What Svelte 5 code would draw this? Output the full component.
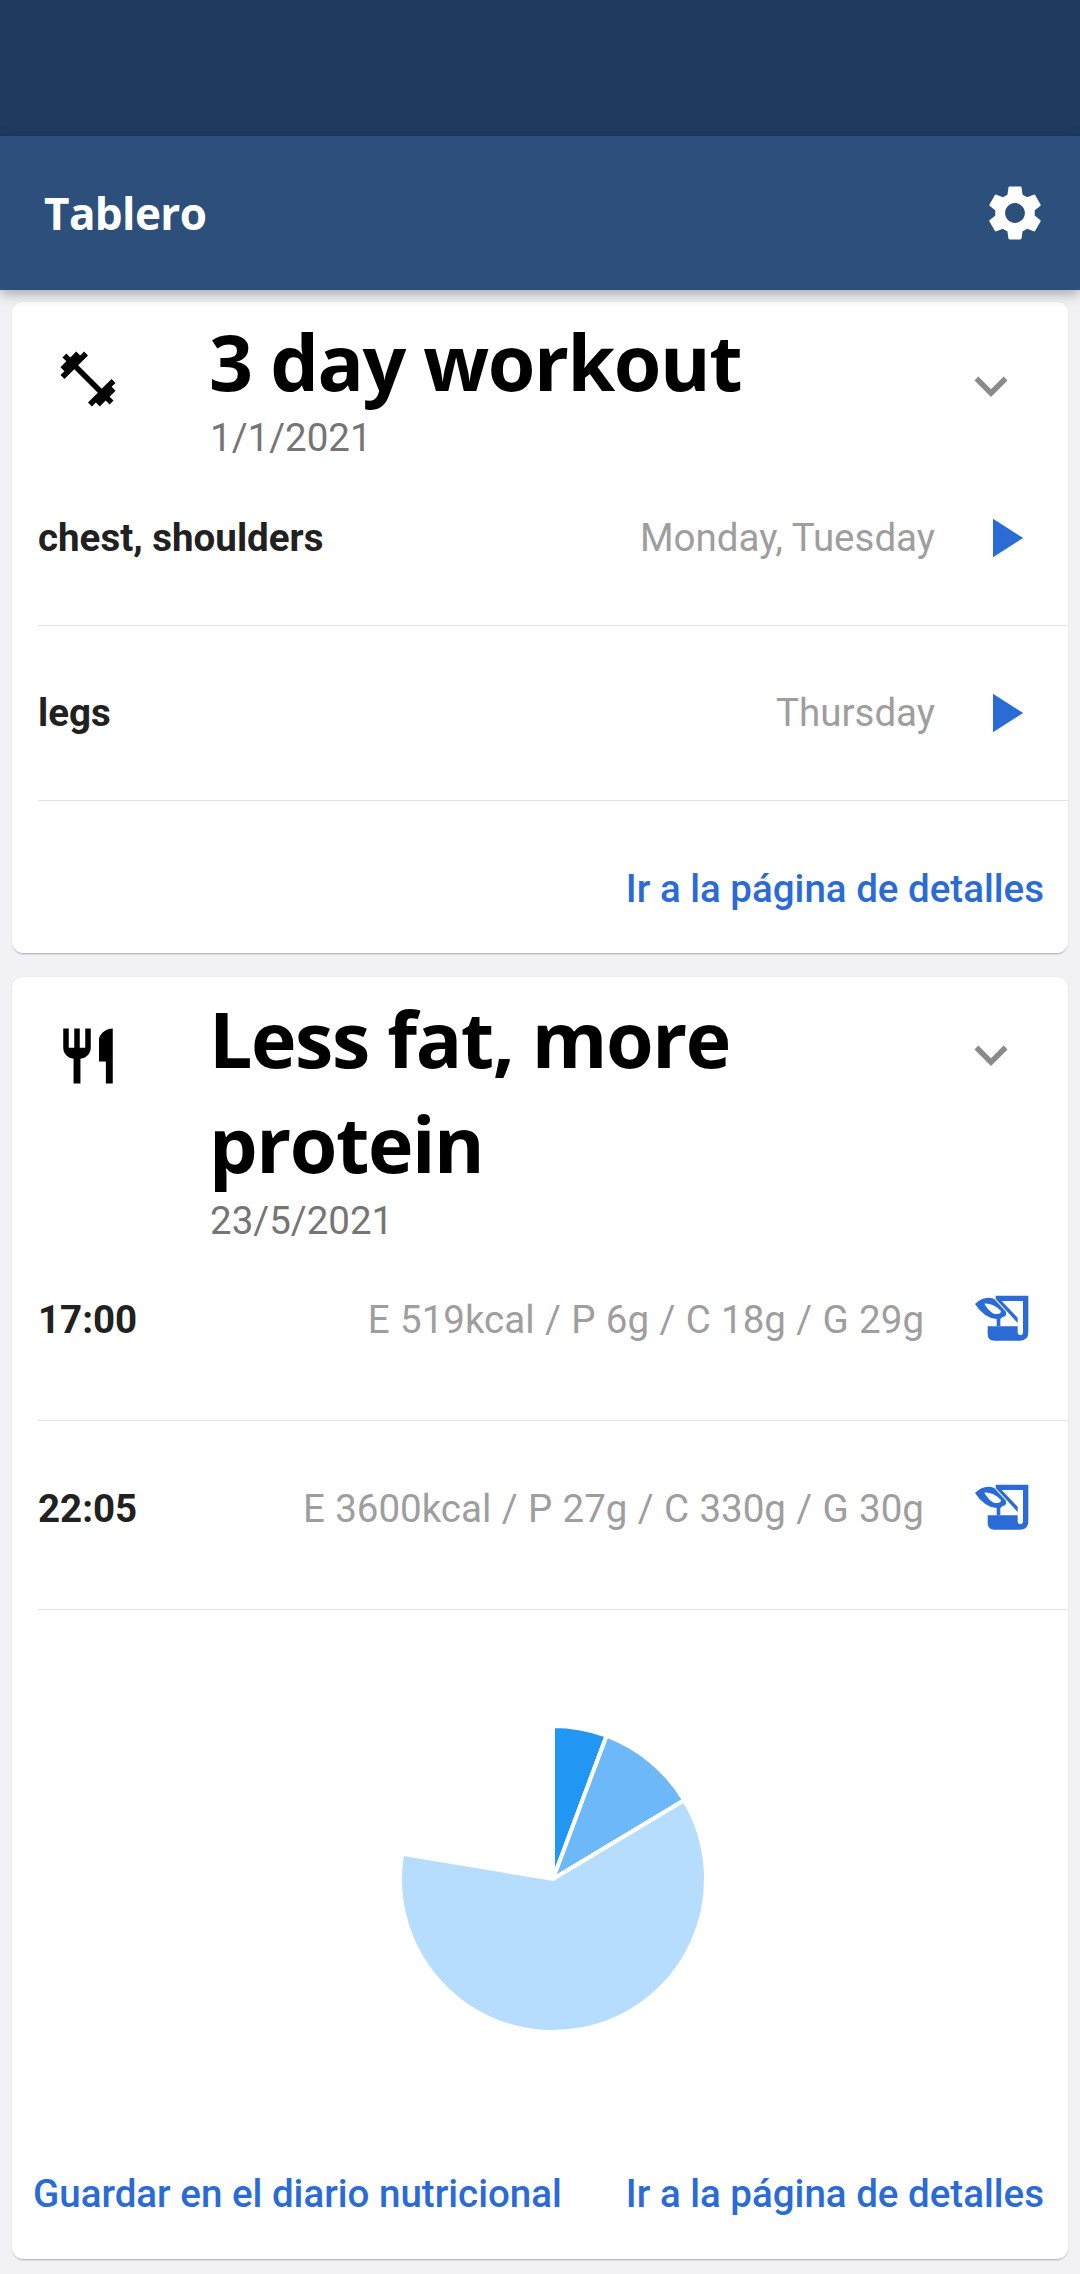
<script>
  const workouts = [
    { name: 'chest, shoulders', days: 'Monday, Tuesday' },
    { name: 'legs', days: 'Thursday' }
  ];
  const meals = [
    { time: '17:00', macros: 'E 519kcal / P 6g / C 18g / G 29g' },
    { time: '22:05', macros: 'E 3600kcal / P 27g / C 330g / G 30g' }
  ];

  // pie slices, angles in degrees clockwise from 12 o'clock
  const slices = [
    { from: 0, to: 20.5, color: '#2196f3' },
    { from: 20.5, to: 59, color: '#6cb8f8' },
    { from: 59, to: 279.5, color: '#b6ddfd' }
  ];
  const cx = 541;
  const cy = 269;
  const r = 153;

  function point(deg) {
    const a = (deg * Math.PI) / 180;
    return `${(cx + r * Math.sin(a)).toFixed(2)} ${(cy - r * Math.cos(a)).toFixed(2)}`;
  }
  function slicePath(s) {
    const large = s.to - s.from > 180 ? 1 : 0;
    return `M${cx} ${cy} L${point(s.from)} A${r} ${r} 0 ${large} 1 ${point(s.to)} Z`;
  }
</script>

{#snippet chevron()}
  <svg class="chevron" viewBox="0 0 24 24"><path d="M16.59 8.59 12 13.17 7.41 8.59 6 10l6 6 6-6z" /></svg>
{/snippet}

<div class="screen">
  <div class="status"></div>
  <header class="appbar">
    <span class="appbar-title">Tablero</span>
    <svg class="gear" viewBox="0 0 24 24">
      <path d="M19.14 12.94c.04-.3.06-.61.06-.94 0-.32-.02-.64-.07-.94l2.03-1.58a.49.49 0 0 0 .12-.61l-1.92-3.32a.488.488 0 0 0-.59-.22l-2.39.96c-.5-.38-1.03-.7-1.62-.94l-.36-2.54a.484.484 0 0 0-.48-.41h-3.84c-.24 0-.43.17-.47.41l-.36 2.54c-.59.24-1.13.57-1.62.94l-2.39-.96c-.22-.08-.47 0-.59.22L2.74 8.87c-.12.21-.08.47.12.61l2.03 1.58c-.05.3-.09.63-.09.94s.02.64.07.94l-2.03 1.58a.49.49 0 0 0-.12.61l1.92 3.32c.12.22.37.29.59.22l2.39-.96c.5.38 1.03.7 1.62.94l.36 2.54c.05.24.24.41.48.41h3.84c.24 0 .44-.17.47-.41l.36-2.54c.59-.24 1.13-.56 1.62-.94l2.39.96c.22.08.47 0 .59-.22l1.92-3.32c.12-.22.07-.47-.12-.61l-2.01-1.58zM12 15.6c-1.98 0-3.6-1.62-3.6-3.6s1.62-3.6 3.6-3.6 3.6 1.62 3.6 3.6-1.62 3.6-3.6 3.6z" />
    </svg>
  </header>

  <section class="card first">
    <div class="head">
      <svg class="head-icon" viewBox="0 0 24 24">
        <path d="M20.57 14.86 22 13.43 20.57 12 17 15.57 8.43 7 12 3.43 10.57 2 9.14 3.43 7.71 2 5.57 4.14 4.14 2.71 2.71 4.14l1.43 1.43L2 7.71l1.43 1.43L2 10.57 3.43 12 7 8.43 15.57 17 12 20.57 13.43 22l1.43-1.43L16.29 22l2.14-2.14 1.43 1.43 1.43-1.43-1.43-1.43L22 16.29z" />
      </svg>
      <div class="head-text">
        <h2>3 day workout</h2>
        <p class="date">1/1/2021</p>
      </div>
      {@render chevron()}
    </div>
    {#each workouts as w}
      <div class="row workout">
        <span class="row-name">{w.name}</span>
        <span class="row-info">{w.days}</span>
        <svg class="row-icon play" viewBox="0 0 24 24"><path d="M8 5v14l11-7z" /></svg>
      </div>
    {/each}
    <div class="links single">
      <span class="link">Ir a la página de detalles</span>
    </div>
  </section>

  <section class="card second">
    <div class="head">
      <svg class="head-icon" viewBox="0 0 24 24">
        <path d="M11 9H9V2H7v7H5V2H3v7c0 2.12 1.66 3.84 3.75 3.97V22h2.5v-9.03C11.34 12.84 13 11.12 13 9V2h-2v7zm5-3v8h2.5v8H21V2c-2.76 0-5 2.24-5 4z" />
      </svg>
      <div class="head-text">
        <h2>Less fat, more protein</h2>
        <p class="date">23/5/2021</p>
      </div>
      {@render chevron()}
    </div>
    {#each meals as m}
      <div class="row meal">
        <span class="row-name">{m.time}</span>
        <span class="row-info">{m.macros}</span>
        <svg class="row-icon diary" viewBox="0 0 330 240">
          <path d="M134 50H232V160Q232 185 207 185H130Q110 185 110 165V142H200V158Q200 168 208 168Q216 168 216 158V66H152L200 116V132L134 60Z" />
          <path fill-rule="evenodd" d="M72 75Q100 48 130 60L165 98Q168 112 155 114L148 120V142H137V120Q100 118 72 75ZM100 74Q125 72 150 96Q150 108 128 104Q112 95 100 74Z" />
        </svg>
      </div>
    {/each}
    <div class="chart">
      <svg width="1056" height="540" viewBox="0 0 1056 540">
        {#each slices as s}
          <path d={slicePath(s)} fill={s.color} stroke="#fff" stroke-width="4" />
        {/each}
      </svg>
    </div>
    <div class="links">
      <span class="link">Guardar en el diario nutricional</span>
      <span class="link">Ir a la página de detalles</span>
    </div>
  </section>
</div>

<style>
  :global(body) {
    margin: 0;
    background: #f2f2f4;
  }
  .screen {
    width: 1080px;
    height: 2274px;
    overflow: hidden;
    background: #f2f2f4;
    font-family: Roboto, sans-serif;
  }
  .status {
    height: 136px;
    background: #1f3a60;
  }
  .appbar {
    position: relative;
    height: 154px;
    background: #2c4f7c;
    display: flex;
    align-items: center;
    justify-content: space-between;
    padding: 0 32px 0 44px;
    box-shadow: 0 4px 12px rgba(0, 0, 0, 0.3);
  }
  .appbar-title {
    font-family: 'Open Sans', sans-serif;
    font-weight: 700;
    font-size: 44px;
    letter-spacing: -0.6px;
    color: #fff;
  }
  .gear {
    width: 66px;
    height: 66px;
    fill: #fff;
  }
  .card {
    margin: 12px 12px 24px;
    background: #fff;
    border-radius: 11px;
    box-shadow: 0 2px 2px -1px rgba(0, 0, 0, 0.3), 0 0 2px rgba(0, 0, 0, 0.07);
  }
  .head {
    display: flex;
    align-items: flex-start;
    padding: 7px 44px 0 43px;
  }
  .second .head {
    padding-top: 9px;
  }
  .head-icon {
    width: 66px;
    height: 66px;
    flex: none;
    margin-top: 37px;
  }
  .head-text {
    flex: 1;
    margin-left: 89px;
  }
  h2 {
    margin: 0 0 3px -1px;
    font-family: 'Open Sans', sans-serif;
    font-weight: 700;
    font-size: 77px;
    line-height: 105px;
    letter-spacing: -1.45px;
    color: #000;
    max-width: 590px;
  }
  .second h2 {
    margin-bottom: 4px;
  }
  .date {
    margin: 0 0 -7px;
    font-size: 38.5px;
    line-height: 41px;
    color: #757575;
  }
  .second .date {
    margin-bottom: -9px;
  }
  .chevron {
    width: 66px;
    height: 66px;
    flex: none;
    fill: #8a8a8a;
  }
  .first .chevron {
    margin-top: 44px;
  }
  .second .chevron {
    margin-top: 36px;
  }
  .row {
    display: flex;
    align-items: center;
    margin-left: 26px;
    padding-right: 31px;
    border-bottom: 1px solid #e4e4e4;
  }
  .workout {
    padding-bottom: 1px;
    box-sizing: border-box;
    height: 175px;
  }
  .meal {
    height: 174px;
    padding-bottom: 14px;
  }
  .row-name {
    font-weight: 700;
    font-size: 38.5px;
    color: #212121;
  }
  .row-info {
    flex: 1;
    text-align: right;
    font-size: 38.5px;
    color: #9e9e9e;
  }
  .meal .row-info {
    word-spacing: 0.8px;
  }
  .row-icon {
    flex: none;
    width: 66px;
    height: 66px;
    fill: #2a6bd6;
  }
  .play {
    margin-left: 36px;
  }
  .diary {
    width: 110px;
    height: 80px;
    margin-left: 27px;
    margin-right: -24px;
  }
  .chart {
    height: 540px;
  }
  .chart svg {
    display: block;
  }
  .links {
    display: flex;
    justify-content: space-between;
    padding: 21px 24px 43px 21px;
  }
  .links.single {
    justify-content: flex-end;
    padding-top: 65px;
    padding-bottom: 42px;
  }
  .link {
    font-weight: 500;
    font-size: 38.5px;
    line-height: 45px;
    color: #2a6bd6;
  }
</style>
